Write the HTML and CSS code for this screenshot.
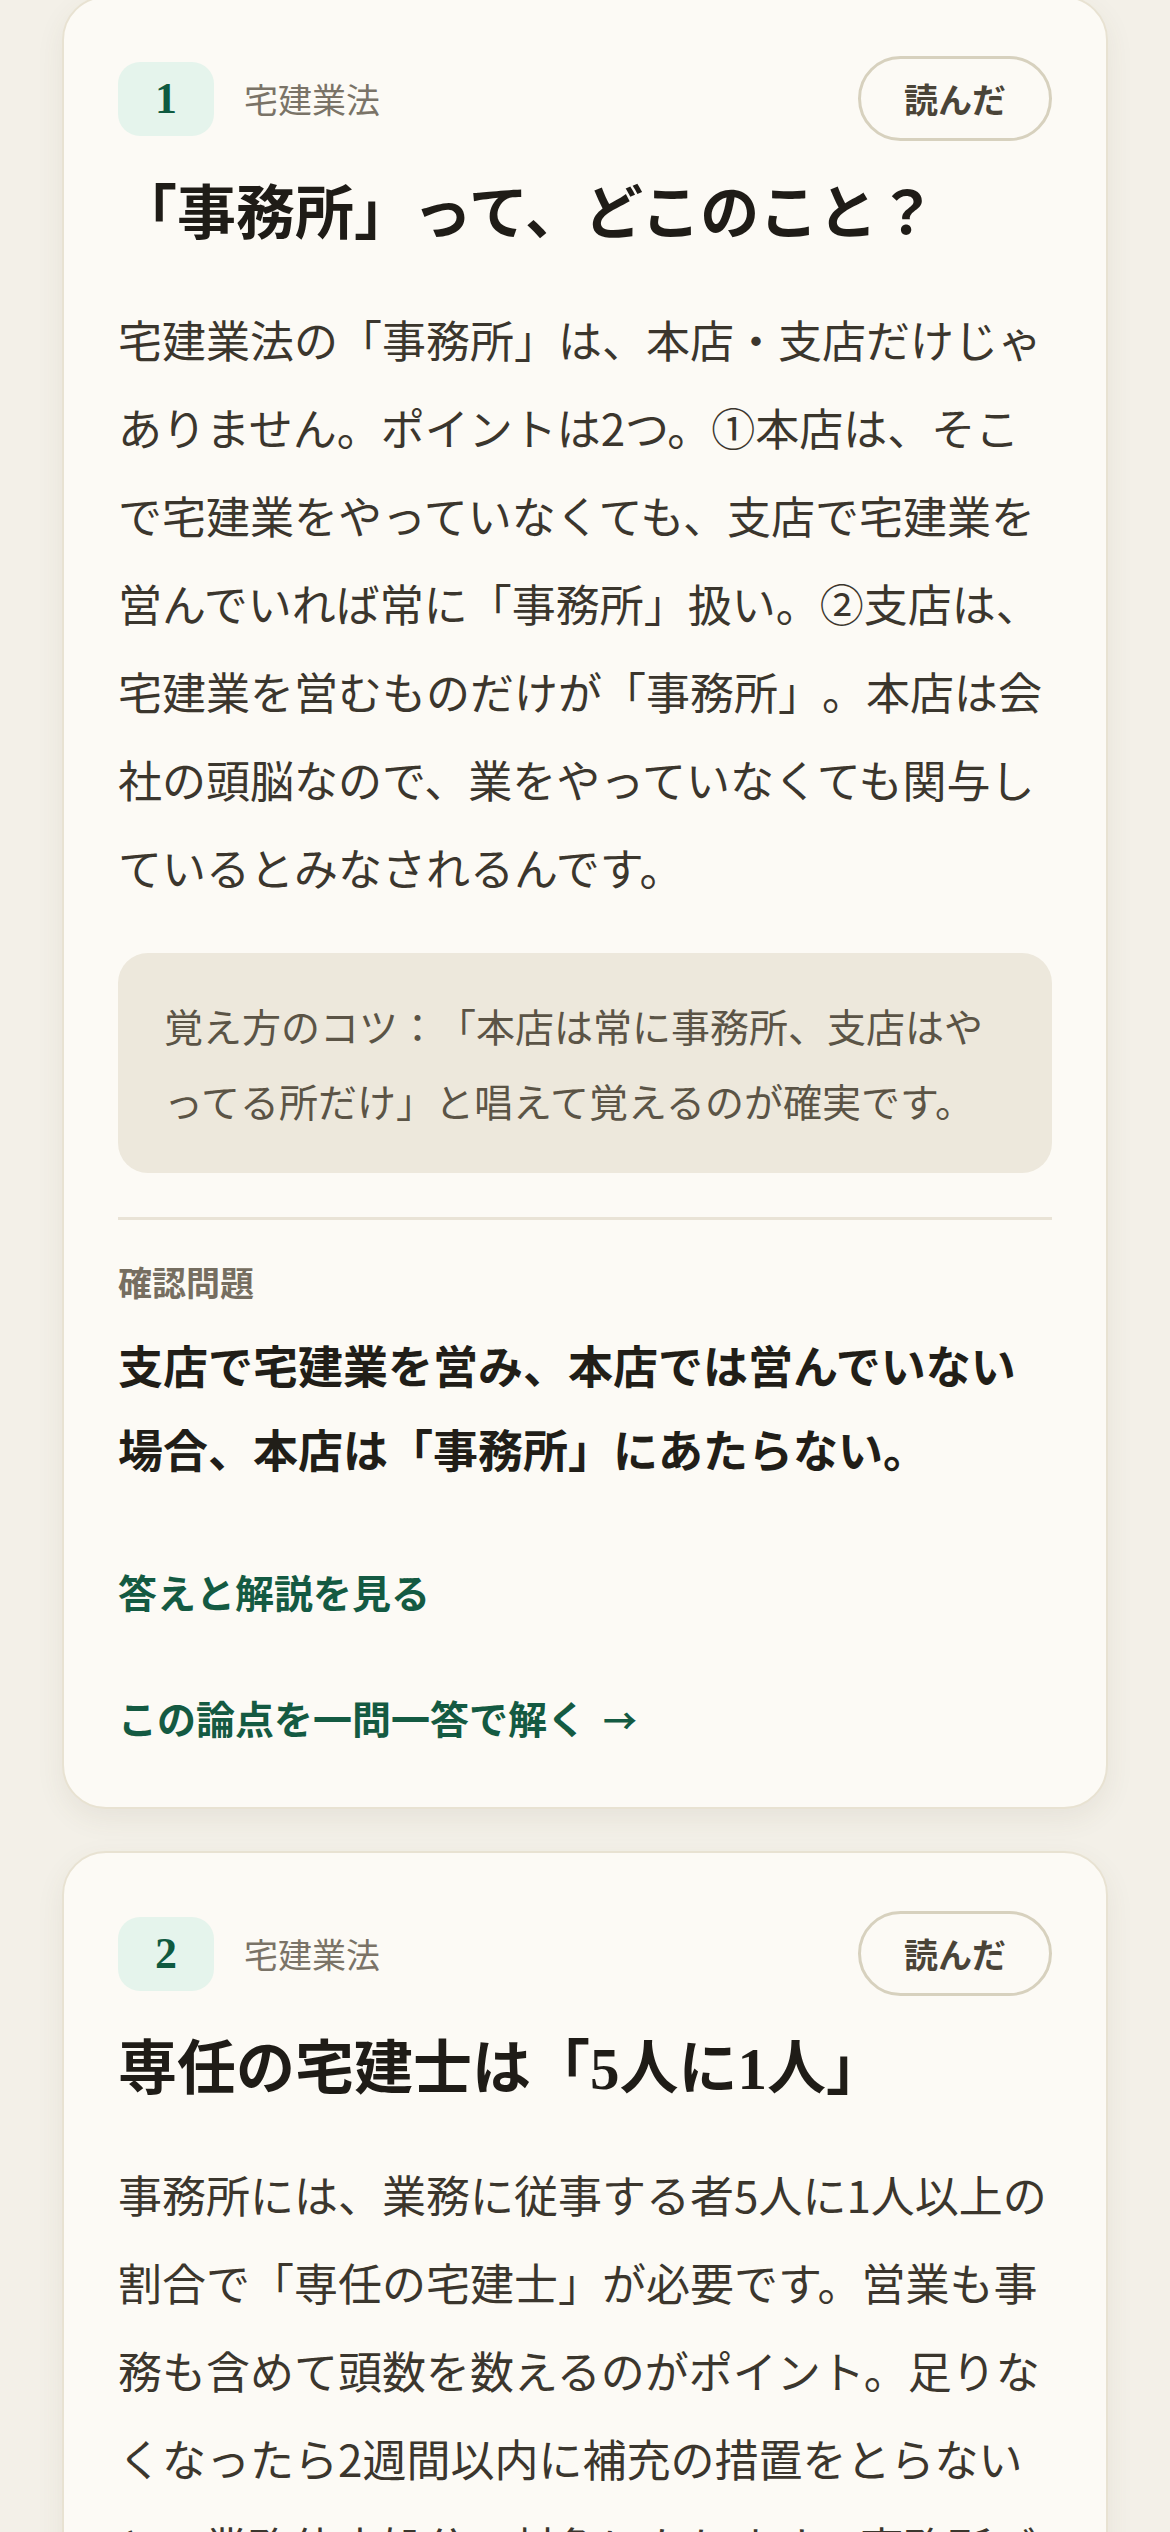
FILE: index.html
```html
<!DOCTYPE html>
<html lang="ja">
<head>
<meta charset="utf-8">
<title>宅建 論点カード</title>
<link rel="stylesheet" href="styles.css">
</head>
<body>
<main class="feed">
  <article class="card">
    <header class="card-head">
      <div class="card-meta">
        <span class="num">1</span>
        <span class="cat">宅建業法</span>
      </div>
      <button class="read-btn" type="button">読んだ</button>
    </header>
    <h2 class="card-title">「事務所」って、どこのこと？</h2>
    <p class="card-body">宅建業法の「事務所」は、本店・支店だけじゃありません。ポイントは2つ。①本店は、そこで宅建業をやっていなくても、支店で宅建業を営んでいれば常に「事務所」扱い。②支店は、宅建業を営むものだけが「事務所」。本店は会社の頭脳なので、業をやっていなくても関与しているとみなされるんです。</p>
    <div class="tip">覚え方のコツ：「本店は常に事務所、支店はやってる所だけ」と唱えて覚えるのが確実です。</div>
    <hr class="divider">
    <div class="quiz-label">確認問題</div>
    <p class="quiz-q">支店で宅建業を営み、本店では営んでいない場合、本店は「事務所」にあたらない。</p>
    <a class="link link-answer" href="#">答えと解説を見る</a>
    <a class="link link-solve" href="#">この論点を一問一答で解く<span class="arrow">→</span></a>
  </article>

  <article class="card">
    <header class="card-head">
      <div class="card-meta">
        <span class="num">2</span>
        <span class="cat">宅建業法</span>
      </div>
      <button class="read-btn" type="button">読んだ</button>
    </header>
    <h2 class="card-title">専任の宅建士は「5人に1人」</h2>
    <p class="card-body">事務所には、業務に従事する者5人に1人以上の割合で「専任の宅建士」が必要です。営業も事務も含めて頭数を数えるのがポイント。足りなくなったら2週間以内に補充の措置をとらないと、業務停止処分の対象になります。事務所ごとの人数で考えるのが宅建士設置のルールです。</p>
  </article>
</main>
</body>
</html>
```

FILE: styles.css
```css
html, body {
  margin: 0;
  padding: 0;
}

body {
  background: #f3f0e8;
  font-family: "Noto Sans CJK JP", "Noto Sans", sans-serif;
  color: #3b362d;
  height: 2532px;
  overflow: hidden;
  text-spacing-trim: space-all;
}

.feed {
  display: flex;
  flex-direction: column;
  gap: 42px;
  padding: 0 62px;
  margin-top: -4px;
}

.card {
  background: #fcfaf5;
  border: 2px solid #e8e2d2;
  border-radius: 44px;
  padding: 58px 54px 57px;
  box-shadow: 0 10px 28px rgba(90, 78, 45, 0.08);
  display: flex;
  flex-direction: column;
}

.card-head {
  display: flex;
  align-items: center;
  justify-content: space-between;
}

.card-meta {
  display: flex;
  align-items: center;
  gap: 30px;
}

.num {
  width: 96px;
  height: 74px;
  border-radius: 22px;
  background: #e5f4ec;
  color: #0f5a40;
  font-family: "Liberation Serif", "Noto Sans CJK JP", serif;
  font-weight: 700;
  font-size: 44px;
  display: flex;
  align-items: center;
  justify-content: center;
}

.cat {
  font-size: 34px;
  color: #7a7367;
  line-height: 1.4;
}

.read-btn {
  height: 85px;
  padding: 0 43px;
  border: 3px solid #d7d1be;
  border-radius: 999px;
  background: transparent;
  font-family: "Noto Sans CJK JP", sans-serif;
  font-weight: 700;
  font-size: 34px;
  color: #4a4438;
  text-spacing-trim: space-all;
}

.card-title {
  margin: 34px 0 0;
  font-family: "Liberation Serif", "Noto Sans CJK JP", serif;
  font-weight: 700;
  font-size: 59px;
  line-height: 78px;
  color: #1f1c17;
}

.card-body {
  margin: 42px 0 0;
  font-size: 44px;
  line-height: 88px;
  color: #3b362d;
}

.tip {
  margin-top: 42px;
  background: #ede8dc;
  border-radius: 30px;
  padding: 35px 46px;
  font-size: 39px;
  line-height: 75px;
  color: #5b5446;
}

.divider {
  margin: 44px 0 0;
  border: 0;
  border-top: 3px solid #e9e3d6;
  height: 0;
}

.quiz-label {
  margin-top: 36px;
  font-size: 34px;
  font-weight: 700;
  line-height: 51px;
  color: #766e60;
}

.quiz-q {
  margin: 16px 0 0;
  font-size: 45px;
  font-weight: 700;
  line-height: 84px;
  color: #211e18;
}

.link {
  font-size: 39px;
  font-weight: 700;
  line-height: 60px;
  color: #145a42;
  text-decoration: none;
  align-self: flex-start;
}

.link-answer {
  margin-top: 70px;
}

.link-solve {
  margin-top: 66px;
}

.arrow {
  display: inline-block;
  margin-left: 17px;
  font-size: 34px;
}
```
